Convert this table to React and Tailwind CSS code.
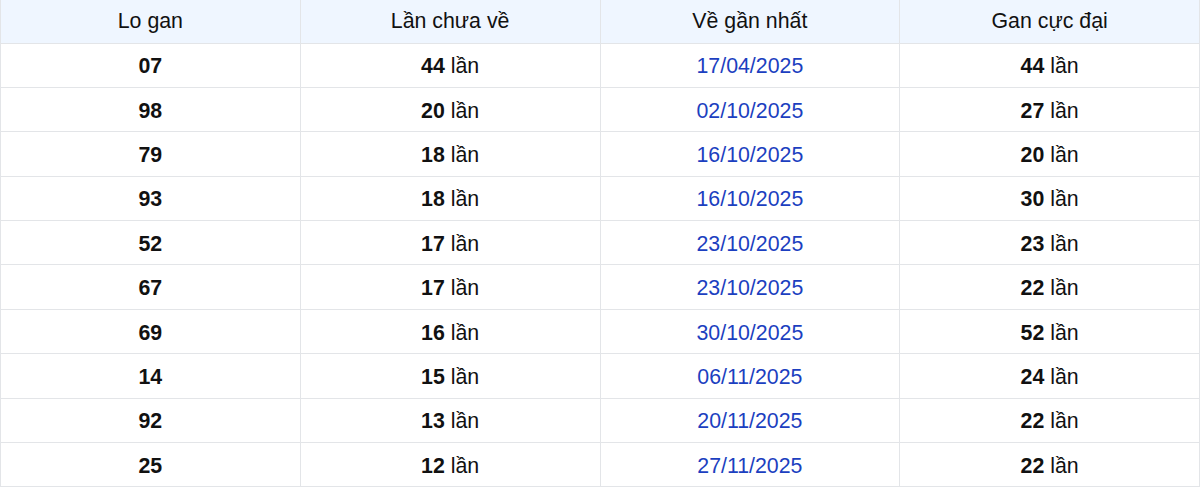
import React from "react";

const rows = [
  ["07", "44", "17/04/2025", "44"],
  ["98", "20", "02/10/2025", "27"],
  ["79", "18", "16/10/2025", "20"],
  ["93", "18", "16/10/2025", "30"],
  ["52", "17", "23/10/2025", "23"],
  ["67", "17", "23/10/2025", "22"],
  ["69", "16", "30/10/2025", "52"],
  ["14", "15", "06/11/2025", "24"],
  ["92", "13", "20/11/2025", "22"],
  ["25", "12", "27/11/2025", "22"],
];

export default function App() {
  return (
    <div className="w-[1200px] h-[488px] overflow-hidden bg-white" style={{ fontFamily: '"Liberation Sans", Arial, sans-serif' }}>
      <table className="w-full table-fixed border-collapse text-[21.33px] text-[#111]">
        <thead>
          <tr className="h-[43px] bg-[#eff6ff]">
            {["Lo gan", "Lần chưa về", "Về gần nhất", "Gan cực đại"].map((h) => (
              <th key={h} className="border border-t-0 border-[#e3e5e8] p-0 pt-[2px] font-normal text-center">
                {h}
              </th>
            ))}
          </tr>
        </thead>
        <tbody>
          {rows.map((r, i) => (
            <tr key={i} className="h-[44.4px]">
              <td className="border border-[#e3e5e8] p-0 pt-[4px] text-center font-bold">{r[0]}</td>
              <td className="border border-[#e3e5e8] p-0 pt-[4px] text-center">
                <span className="font-bold">{r[1]}</span> lần
              </td>
              <td className="border border-[#e3e5e8] p-0 pt-[4px] text-center text-[#1c3fc0]">{r[2]}</td>
              <td className="border border-[#e3e5e8] p-0 pt-[4px] text-center">
                <span className="font-bold">{r[3]}</span> lần
              </td>
            </tr>
          ))}
        </tbody>
      </table>
    </div>
  );
}
